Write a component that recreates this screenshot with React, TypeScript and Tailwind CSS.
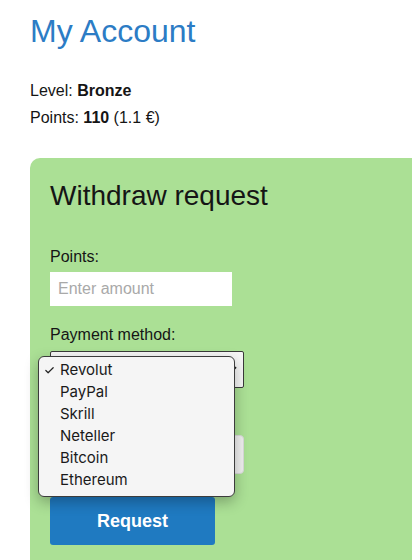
import { Check } from 'lucide-react'

const methods = ['Revolut', 'PayPal', 'Skrill', 'Neteller', 'Bitcoin', 'Ethereum']

function MethodPopup() {
  return (
    <ul className="absolute left-[-12px] top-[5px] z-10 w-[197px] rounded-[6px] border border-[#3c3c3c] bg-[#f5f5f5] pb-[5px] pt-[2px] font-['Inter',sans-serif] text-[15px] text-[#1a1a1a] shadow-[0_5px_14px_rgba(0,0,0,0.28)]">
      {methods.map((m, i) => (
        <li key={m} className="relative h-[22px] pl-[21px] leading-[22px]">
          {i === 0 && (
            <Check size={11} strokeWidth={2.6} className="absolute left-[5px] top-[6px] text-[#222]" />
          )}
          {m}
        </li>
      ))}
    </ul>
  )
}

export default function App() {
  return (
    <div className="h-[560px] w-[412px] overflow-hidden bg-white font-['Liberation_Sans',Arial,sans-serif] text-[#151515]">
      <div className="pl-[30px]">
        <h1 className="pt-[12px] text-[32px] leading-[38px] text-[#2c7cc5]">My Account</h1>

        <div className="mt-[27px] text-[16px] leading-[27px]">
          <p>
            Level: <b>Bronze</b>
          </p>
          <p>
            Points: <b>110</b> (1.1 €)
          </p>
        </div>

        <div className="mt-[27px] w-[420px] rounded-tl-[10px] bg-[#abe095] pb-[40px] pl-[20px] pt-[22px]">
          <h2 className="text-[28px] leading-[32px]">Withdraw request</h2>

          <label className="mt-[35px] block text-[16px] leading-[19px]">Points:</label>
          <input
            placeholder="Enter amount"
            className="mt-[6px] block h-[34px] w-[182px] bg-white px-[8px] text-[16px] outline-none placeholder:text-[#a9a9a9]"
          />

          <label className="mt-[19px] block text-[16px] leading-[19px]">Payment method:</label>
          <div className="relative mt-[7px] h-[37px] w-[194px]">
            <div className="flex h-full w-full items-center justify-between rounded-[2px] border border-[#3a3a3a] bg-[#f6f6f6] pl-[8px] pr-[6px] text-[16px]">
              <span>Revolut</span>
              <svg width="10" height="7" viewBox="0 0 10 7" className="text-[#222]">
                <path d="M1 1.2 5 5.2 9 1.2" fill="none" stroke="currentColor" strokeWidth="1.8" />
              </svg>
            </div>
            <MethodPopup />
          </div>

          {/* field under the open list, label hidden by it */}
          <div className="mt-[47px] h-[39px] w-[194px] rounded-[4px] border border-[#d9d9d9] bg-[#efefef]" />

          <button className="mt-[23px] block h-[48px] w-[165px] rounded-[3px] bg-[#1f7ac1] text-[18px] font-bold text-white">
            Request
          </button>
        </div>
      </div>
    </div>
  )
}
